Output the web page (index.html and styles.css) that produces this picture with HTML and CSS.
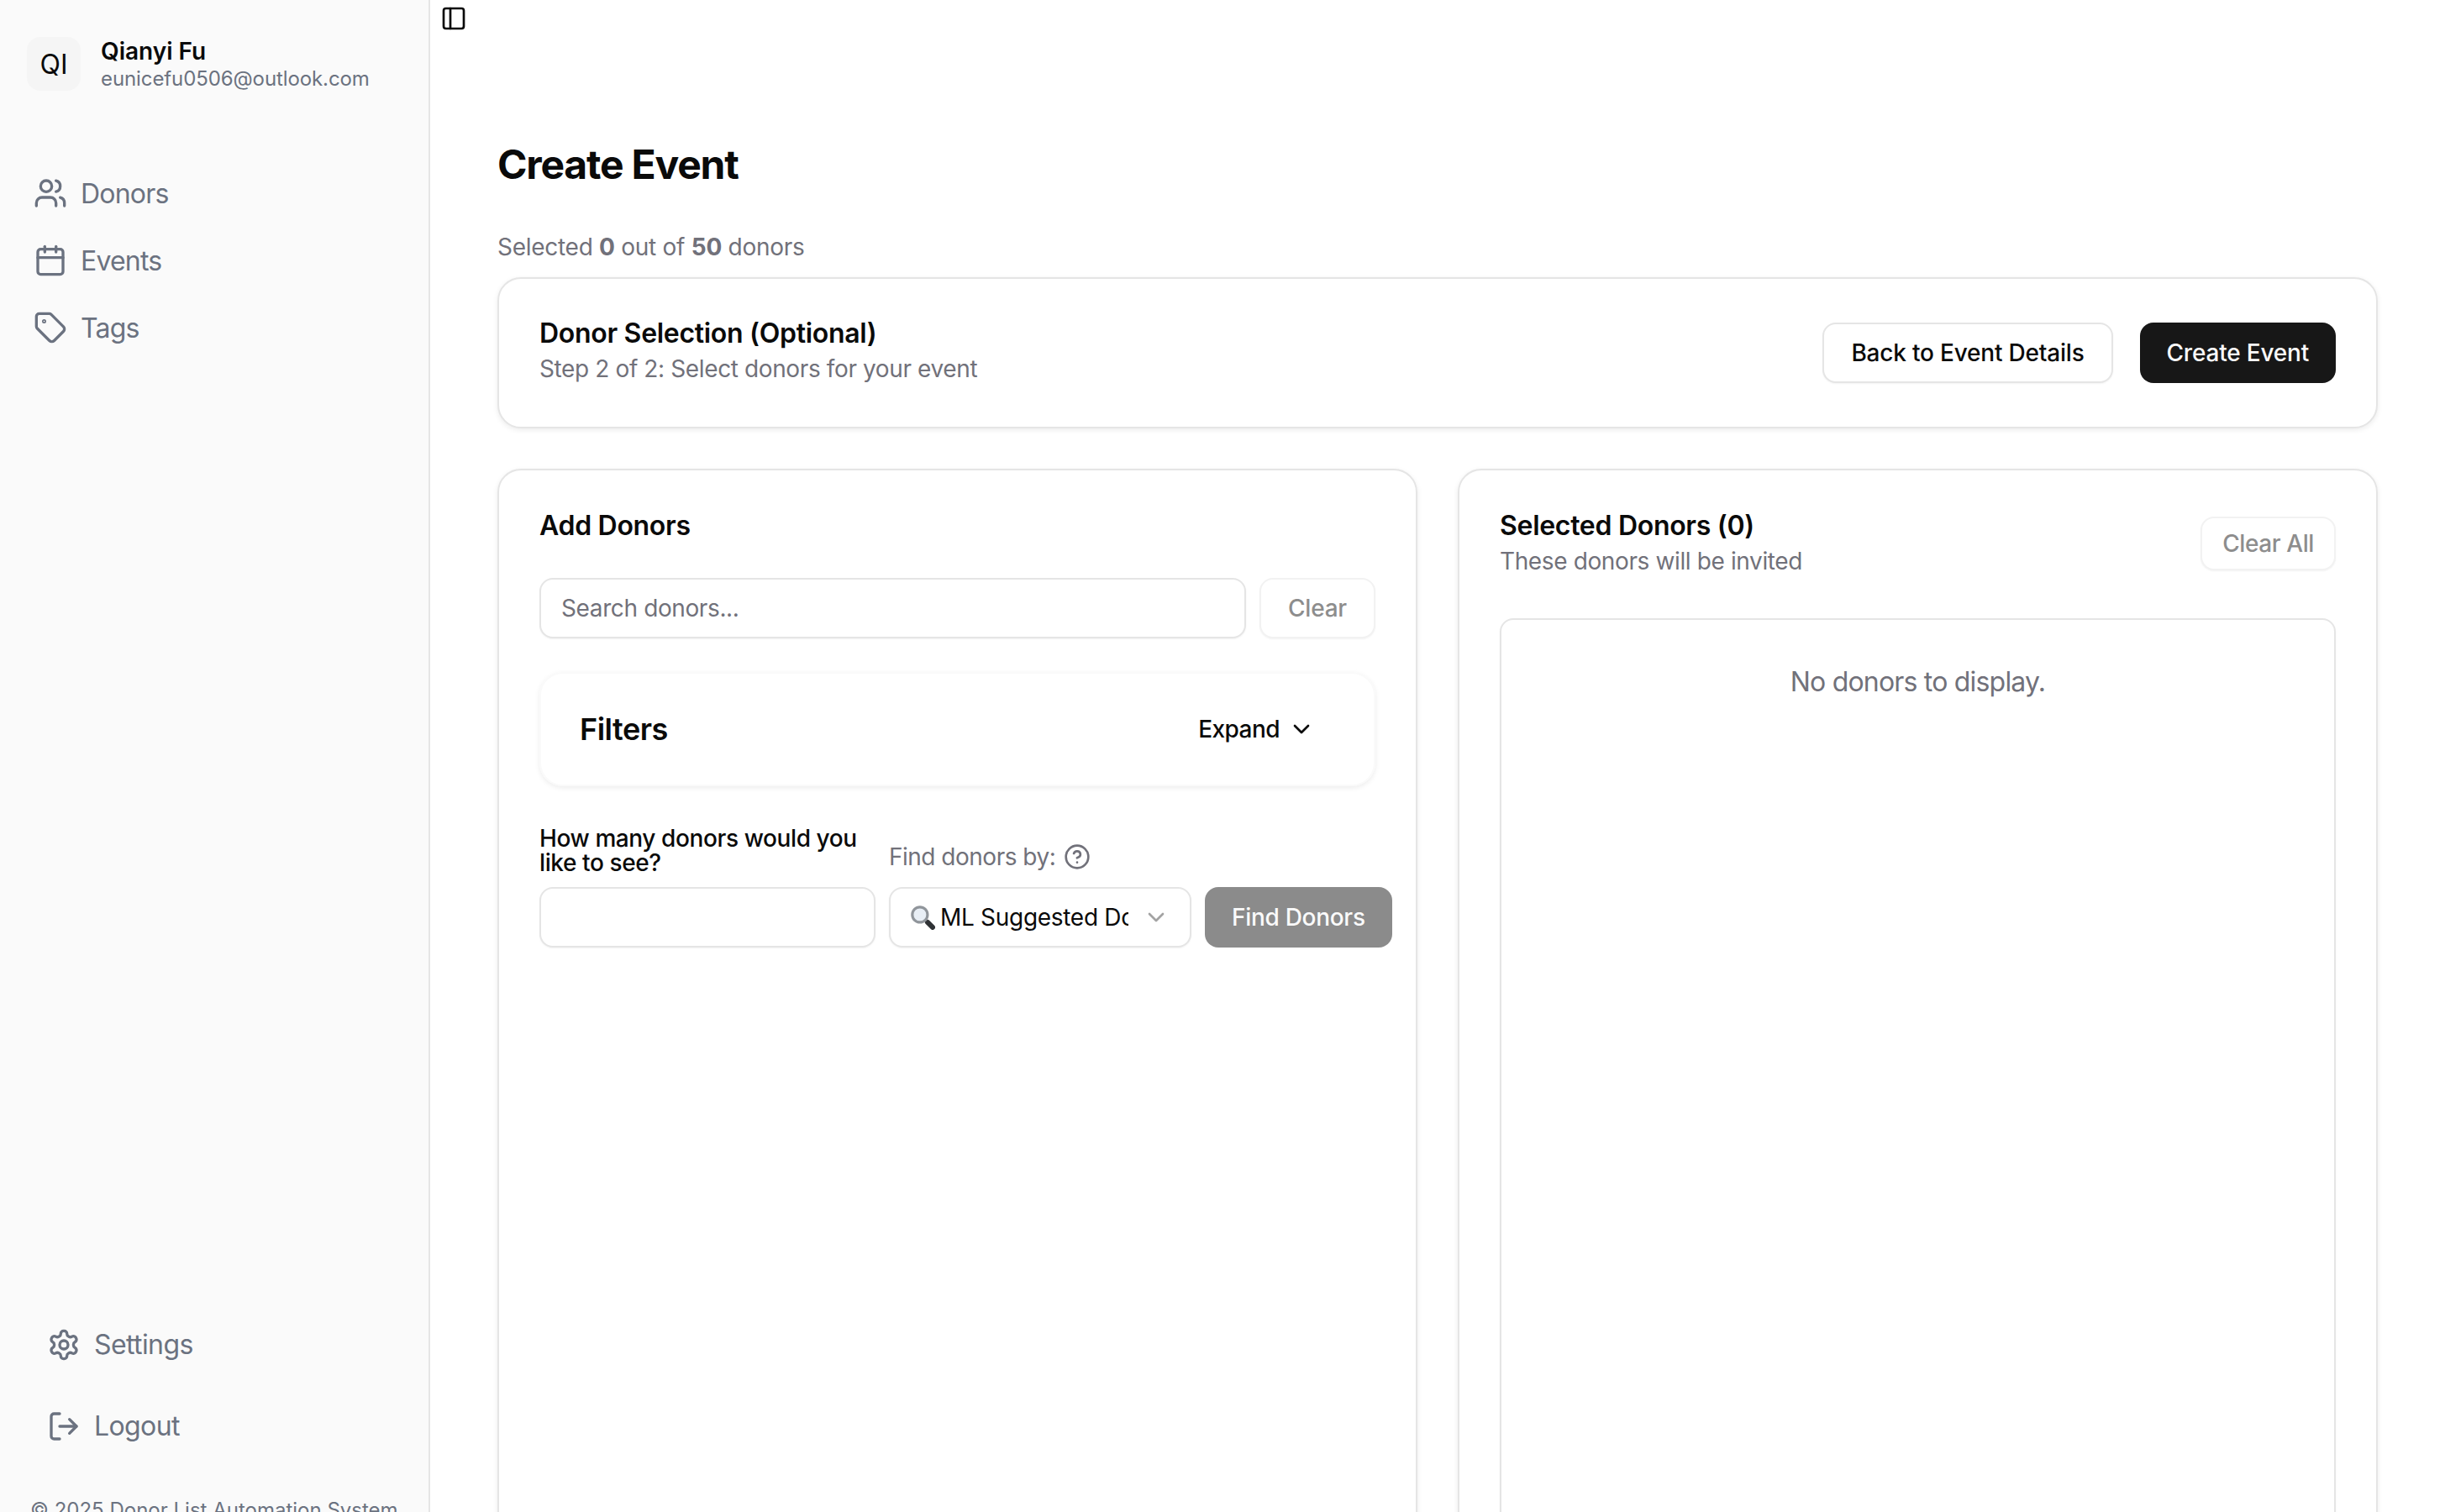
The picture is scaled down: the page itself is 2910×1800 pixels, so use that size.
FILE: index.html
```html
<!DOCTYPE html>
<html lang="en">
<head>
  <meta charset="UTF-8">
  <meta name="viewport" content="width=device-width, initial-scale=1.0">
  <title>Create Event</title>
  <link rel="stylesheet" href="styles.css">
</head>
<body>
  <aside class="sidebar">
    <div class="user">
      <div class="avatar">QI</div>
      <div class="user-text">
        <div class="user-name">Qianyi Fu</div>
        <div class="user-email">eunicefu0506@outlook.com</div>
      </div>
    </div>

    <nav class="nav">
      <a class="nav-item">
        <svg class="icon" viewBox="0 0 24 24"><path d="M16 21v-2a4 4 0 0 0-4-4H6a4 4 0 0 0-4 4v2"/><circle cx="9" cy="7" r="4"/><path d="M22 21v-2a4 4 0 0 0-3-3.87"/><path d="M16 3.13a4 4 0 0 1 0 7.75"/></svg>
        Donors
      </a>
      <a class="nav-item">
        <svg class="icon" viewBox="0 0 24 24"><path d="M8 2v4"/><path d="M16 2v4"/><rect x="3" y="4" width="18" height="18" rx="2"/><path d="M3 10h18"/></svg>
        Events
      </a>
      <a class="nav-item">
        <svg class="icon" viewBox="0 0 24 24"><path d="M12.586 2.586A2 2 0 0 0 11.172 2H4a2 2 0 0 0-2 2v7.172a2 2 0 0 0 .586 1.414l8.704 8.704a2.426 2.426 0 0 0 3.42 0l6.58-6.58a2.426 2.426 0 0 0 0-3.42z"/><circle cx="7.5" cy="7.5" r=".5"/></svg>
        Tags
      </a>
    </nav>

    <div class="sidebar-bottom">
      <a class="bottom-item">
        <svg class="icon" viewBox="0 0 24 24"><path d="M12.22 2h-.44a2 2 0 0 0-2 2v.18a2 2 0 0 1-1 1.73l-.43.25a2 2 0 0 1-2 0l-.15-.08a2 2 0 0 0-2.73.73l-.22.38a2 2 0 0 0 .73 2.73l.15.1a2 2 0 0 1 1 1.72v.51a2 2 0 0 1-1 1.74l-.15.09a2 2 0 0 0-.73 2.73l.22.38a2 2 0 0 0 2.73.73l.15-.08a2 2 0 0 1 2 0l.43.25a2 2 0 0 1 1 1.73V20a2 2 0 0 0 2 2h.44a2 2 0 0 0 2-2v-.18a2 2 0 0 1 1-1.73l.43-.25a2 2 0 0 1 2 0l.15.08a2 2 0 0 0 2.73-.73l.22-.39a2 2 0 0 0-.73-2.73l-.15-.08a2 2 0 0 1-1-1.74v-.5a2 2 0 0 1 1-1.74l.15-.09a2 2 0 0 0 .73-2.73l-.22-.38a2 2 0 0 0-2.73-.73l-.15.08a2 2 0 0 1-2 0l-.43-.25a2 2 0 0 1-1-1.73V4a2 2 0 0 0-2-2z"/><circle cx="12" cy="12" r="3"/></svg>
        Settings
      </a>
      <a class="bottom-item">
        <svg class="icon" viewBox="0 0 24 24"><path d="M9 21H5a2 2 0 0 1-2-2V5a2 2 0 0 1 2-2h4"/><path d="m16 17 5-5-5-5"/><path d="M21 12H9"/></svg>
        Logout
      </a>
      <div class="copyright">© 2025 Donor List Automation System</div>
    </div>
  </aside>

  <div class="main">
    <div class="topbar">
      <svg class="toggle" viewBox="0 0 24 24"><rect x="3" y="3" width="18" height="18" rx="2"/><path d="M9 3v18"/></svg>
    </div>

    <div class="content">
      <h1 class="page-title">Create Event</h1>
      <p class="selected-count">Selected <b>0</b> out of <b>50</b> donors</p>

      <section class="card step-card">
        <div class="step-text">
          <h2 class="card-title">Donor Selection (Optional)</h2>
          <p class="card-desc">Step 2 of 2: Select donors for your event</p>
        </div>
        <div class="step-actions">
          <button class="btn btn-outline">Back to Event Details</button>
          <button class="btn btn-dark">Create Event</button>
        </div>
      </section>

      <div class="panels">
        <section class="card panel">
          <h2 class="card-title">Add Donors</h2>

          <div class="search-row">
            <input class="input search-input" type="text" placeholder="Search donors...">
            <button class="btn btn-outline btn-disabled">Clear</button>
          </div>

          <div class="filters">
            <h3 class="filters-title">Filters</h3>
            <div class="expand">
              Expand
              <svg class="chevron" viewBox="0 0 24 24"><path d="m6 9 6 6 6-6"/></svg>
            </div>
          </div>

          <div class="find-row">
            <div class="field field-count">
              <label class="label-strong">How many donors would you like to see?</label>
              <input class="input" type="text">
            </div>
            <div class="field field-by">
              <label class="label-muted">
                Find donors by:
                <svg class="help" viewBox="0 0 24 24"><circle cx="12" cy="12" r="10"/><path d="M9.09 9a3 3 0 0 1 5.83 1c0 2-3 3-3 3"/><path d="M12 17h.01"/></svg>
              </label>
              <div class="select">
                <svg class="magnifier" viewBox="0 0 24 24"><path class="magnifier-neck" d="m14 14 2 2"/><path class="magnifier-handle" d="m16.5 16.5 5 5"/><circle class="magnifier-glass" cx="9" cy="9" r="7.5"/></svg>
                <span class="select-text">ML Suggested Donors</span>
                <svg class="select-chevron" viewBox="0 0 24 24"><path d="m6 9 6 6 6-6"/></svg>
              </div>
            </div>
            <button class="btn find-btn">Find Donors</button>
          </div>
        </section>

        <section class="card panel">
          <div class="selected-head">
            <div>
              <h2 class="card-title">Selected Donors (0)</h2>
              <p class="card-desc">These donors will be invited</p>
            </div>
            <button class="btn btn-outline btn-disabled btn-small">Clear All</button>
          </div>
          <div class="empty-box">No donors to display.</div>
        </section>
      </div>
    </div>
  </div>
</body>
</html>
```

FILE: styles.css
```css
* {
  box-sizing: border-box;
}
html, body {
  height: 100%;
}
body {
  margin: 0;
  display: flex;
  height: 100vh;
  overflow: hidden;
  font-family: Inter, "Liberation Sans", sans-serif;
  color: #0a0a0a;
  background-color: #fff;
}
h1, h2, h3, p {
  margin: 0;
}
.icon {
  width: 40px;
  height: 40px;
  flex-shrink: 0;
  fill: none;
  stroke: currentColor;
  stroke-width: 2;
  stroke-linecap: round;
  stroke-linejoin: round;
}

/* sidebar */
.sidebar {
  width: 512px;
  flex-shrink: 0;
  height: 100%;
  display: flex;
  flex-direction: column;
  overflow: hidden;
  background-color: #fafafa;
  border-right: 2px solid #e5e5e5;
}
.user {
  display: flex;
  align-items: flex-start;
  gap: 24px;
  padding: 44px 32px 0;
}
.avatar {
  width: 64px;
  height: 64px;
  display: flex;
  align-items: center;
  justify-content: center;
  border-radius: 16px;
  background-color: #f5f5f5;
  font-size: 32px;
}
.user-name {
  font-size: 28px;
  font-weight: 600;
  line-height: 34px;
}
.user-email {
  font-size: 24px;
  line-height: 32px;
  letter-spacing: -0.1px;
  color: #6b7280;
}
.nav {
  display: flex;
  flex-direction: column;
  gap: 16px;
  margin-top: 88px;
  padding: 0 40px;
}
.nav-item {
  height: 64px;
  display: flex;
  align-items: center;
  gap: 16px;
  font-size: 32px;
  letter-spacing: -0.8px;
  color: #6b7280;
}
.sidebar-bottom {
  margin-top: auto;
  display: flex;
  flex-direction: column;
  padding-left: 36px;
}
.bottom-item {
  height: 97px;
  display: flex;
  align-items: center;
  gap: 16px;
  padding-left: 20px;
  font-size: 32px;
  letter-spacing: -0.6px;
  color: #6b7280;
}
.copyright {
  margin-top: 36px;
  height: 18px;
  font-size: 24px;
  line-height: 32px;
  color: #6b7280;
  white-space: nowrap;
}

/* main area */
.main {
  flex: 1;
  min-width: 0;
  height: 100%;
  overflow: hidden;
}
.topbar {
  height: 44px;
  padding: 6px 12px;
}
.toggle {
  display: block;
  width: 32px;
  height: 32px;
  fill: none;
  stroke: #0a0a0a;
  stroke-width: 2;
  stroke-linecap: round;
  stroke-linejoin: round;
}
.content {
  padding: 120px 80px 0;
}
.page-title {
  font-size: 48px;
  line-height: 64px;
  font-weight: 700;
  letter-spacing: -1.2px;
}
.selected-count {
  margin-top: 46px;
  font-size: 28px;
  line-height: 40px;
  letter-spacing: -0.28px;
  color: #71717a;
}
.selected-count b {
  font-weight: 700;
}
.card {
  background-color: #fff;
  border: 2px solid #e5e5e5;
  border-radius: 28px;
  box-shadow: 0 2px 6px rgba(0, 0, 0, 0.08);
}
.step-card {
  margin-top: 16px;
  height: 180px;
  padding: 0 48px;
  display: flex;
  align-items: center;
  justify-content: space-between;
}
.step-text {
  margin-bottom: 4px;
}
.card-title {
  font-size: 32px;
  line-height: 40px;
  font-weight: 600;
  letter-spacing: -0.3px;
}
.card-desc {
  margin-top: 2px;
  font-size: 28px;
  line-height: 40px;
  letter-spacing: -0.38px;
  color: #71717a;
}
.step-actions {
  display: flex;
  gap: 32px;
}

/* buttons */
.btn {
  height: 72px;
  padding: 0 32px;
  border-radius: 16px;
  border: 0;
  font-family: inherit;
  font-size: 28px;
  font-weight: 500;
  letter-spacing: -0.2px;
  white-space: nowrap;
}
.btn-outline {
  background-color: #fff;
  color: #0a0a0a;
  border: 2px solid #e5e5e5;
  box-shadow: 0 1px 2px rgba(0, 0, 0, 0.05);
}
.btn-dark {
  background-color: #171717;
  color: #fafafa;
}
.btn-disabled {
  color: #8d8d8d;
  border-color: #f2f2f2;
}
.btn-small {
  height: 64px;
  padding: 0 24px;
  letter-spacing: -0.4px;
}

/* panels */
.panels {
  display: grid;
  grid-template-columns: minmax(0, 1fr) minmax(0, 1fr);
  gap: 48px;
  margin-top: 48px;
}
.panel {
  height: 1400px;
  padding: 46px 48px;
}
.search-row {
  display: flex;
  gap: 16px;
  margin-top: 42px;
}
.input {
  height: 72px;
  padding: 0 24px;
  background-color: #fff;
  border: 2px solid #e5e5e5;
  border-radius: 16px;
  box-shadow: 0 1px 2px rgba(0, 0, 0, 0.05);
  font-family: inherit;
  font-size: 28px;
  letter-spacing: -0.38px;
  outline: none;
}
.input::placeholder {
  color: #71717a;
}
.search-input {
  flex: 1;
  min-width: 0;
}
.filters {
  margin-top: 40px;
  height: 136px;
  padding: 0 46px;
  display: flex;
  align-items: center;
  justify-content: space-between;
  border-radius: 28px;
  border: 2px solid #fafafa;
  box-shadow: 0 2px 6px rgba(0, 0, 0, 0.08);
}
.filters-title {
  font-size: 36px;
  font-weight: 600;
  letter-spacing: -0.5px;
}
.expand {
  display: flex;
  align-items: center;
  gap: 10px;
  padding-right: 24px;
  font-size: 28px;
  font-weight: 500;
  letter-spacing: -0.55px;
}
.chevron {
  width: 32px;
  height: 32px;
  fill: none;
  stroke: #0a0a0a;
  stroke-width: 2;
  stroke-linecap: round;
  stroke-linejoin: round;
}
.find-row {
  display: flex;
  align-items: flex-end;
  gap: 16px;
  margin-top: 48px;
}
.field {
  display: flex;
  flex-direction: column;
  flex-shrink: 0;
  gap: 14px;
}
.field-count {
  width: 400px;
}
.field-by {
  width: 360px;
  gap: 20px;
}
.label-strong {
  font-size: 28px;
  font-weight: 500;
  line-height: 29px;
  letter-spacing: -0.4px;
}
.label-muted {
  display: flex;
  align-items: center;
  gap: 10px;
  font-size: 28px;
  line-height: 32px;
  letter-spacing: -0.5px;
  color: #71717a;
}
.help {
  width: 32px;
  height: 32px;
  fill: none;
  stroke: #71717a;
  stroke-width: 2;
  stroke-linecap: round;
  stroke-linejoin: round;
}
.select {
  height: 72px;
  padding: 0 24px;
  display: flex;
  align-items: center;
  background-color: #fff;
  border: 2px solid #e5e5e5;
  border-radius: 16px;
  box-shadow: 0 1px 2px rgba(0, 0, 0, 0.05);
}
.magnifier {
  width: 29px;
  height: 29px;
  flex-shrink: 0;
  margin-right: 6px;
}
.magnifier-glass {
  fill: #e8eef5;
  stroke: #90959b;
  stroke-width: 2.6;
}
.magnifier-neck {
  fill: none;
  stroke: #85898e;
  stroke-width: 3;
}
.magnifier-handle {
  fill: none;
  stroke: #2f3235;
  stroke-width: 5;
  stroke-linecap: round;
}
.select-text {
  flex: 1;
  min-width: 0;
  overflow: hidden;
  white-space: nowrap;
  font-size: 28px;
  letter-spacing: -0.3px;
}
.select-chevron {
  width: 32px;
  height: 32px;
  flex-shrink: 0;
  margin-left: 17px;
  fill: none;
  stroke: #a3a3a3;
  stroke-width: 2;
  stroke-linecap: round;
  stroke-linejoin: round;
}
.find-btn {
  background-color: #8b8b8b;
  color: #fafafa;
  letter-spacing: -0.3px;
}
.selected-head {
  display: flex;
  align-items: center;
  justify-content: space-between;
}
.empty-box {
  margin-top: 48px;
  height: 1200px;
  padding-top: 54px;
  text-align: center;
  font-size: 32px;
  letter-spacing: -0.8px;
  color: #71717a;
  border: 2px solid #e5e5e5;
  border-radius: 16px;
  box-shadow: 0 1px 2px rgba(0, 0, 0, 0.05);
}
```
